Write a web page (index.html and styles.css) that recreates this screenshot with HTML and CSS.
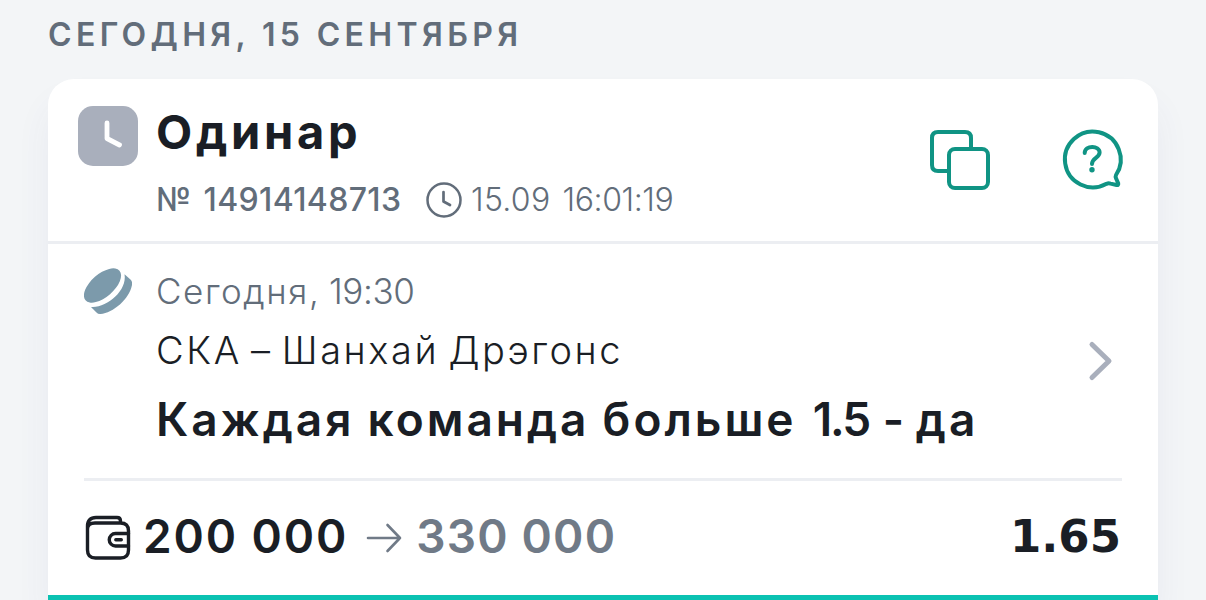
FILE: index.html
```
<!DOCTYPE html>
<html lang="ru">
<head>
    <meta charset="UTF-8">
    <meta name="viewport" content="width=device-width, initial-scale=1.0">
    <title>История ставок</title>
    <link rel="stylesheet" href="styles.css">
</head>
<body>
    <main class="history">
        <h2 class="day">СЕГОДНЯ, 15 СЕНТЯБРЯ</h2>

        <article class="bet">
            <header class="bet-header">
                <div class="status">
                    <svg class="icon" width="60" height="60" viewBox="0 0 60 60">
                        <path d="M29 17v15.500l12.500 6.500" stroke="#fff" stroke-width="4.800"/>
                    </svg>
                </div>
                <div class="bet-info">
                    <h3 class="bet-type">Одинар</h3>
                    <div class="meta">
                        <span class="bet-number">№ <span class="digits">14914148713</span></span>
                        <svg class="icon" width="36" height="36" viewBox="0 0 36 36">
                            <circle cx="18" cy="18" r="16.500" stroke-width="2.500"/>
                            <path d="M17.500 10v9.500l6.500 3.500" stroke-width="2.700"/>
                        </svg>
                        <time class="bet-time"><span>15.09</span><span class="clock">16:01:19</span></time>
                    </div>
                </div>
                <div class="actions">
                    <svg class="icon" width="60" height="60" viewBox="0 0 60 60">
                        <path d="M19 41H8q-6 0-6-6V8q0-6 6-6h27q6 0 6 6v11"/>
                        <rect x="19" y="19" width="39" height="39" rx="6"/>
                    </svg>
                    <svg class="icon" width="60" height="60" viewBox="0 0 60 60">
                        <path d="M54 45A27.900 27.900 0 1 0 44.500 53.800Q46.500 53 48.500 53.600L54.500 55Q56.600 55.300 56.200 53.300L54 48.300Q53.200 46.800 54 45Z"/>
                        <path d="M22.700 23C22.900 15 37.600 15 37.600 22.500C37.600 28 30 28 30 34"/>
                        <circle cx="30" cy="39.800" r="2.700" fill="currentColor" stroke="none"/>
                    </svg>
                </div>
            </header>

            <section class="event">
                <svg class="puck" width="50" height="48" viewBox="0 0 50 48">
                    <ellipse cx="18.500" cy="17.500" rx="22.500" ry="11.500" transform="rotate(-41 18.500 17.500)"/>
                    <path d="M40.500 6.300L47 12Q48.500 13.500 48 17C45.500 31 29 45 16.500 46Q14 46.200 12.500 44.500L7 38.900C22 40.500 43.500 23 40.500 6.300Z"/>
                </svg>
                <div class="event-info">
                    <time class="event-date">Сегодня, <span class="event-hour">19:30</span></time>
                    <p class="teams">СКА – Шанхай Дрэгонс</p>
                    <p class="market">Каждая команда больше <span class="market-value">1.5 - </span>да</p>
                </div>
                <svg class="icon chevron" width="24" height="40" viewBox="0 0 24 40">
                    <path d="M3 3.500L20 20L3 36.500" stroke-width="5"/>
                </svg>
            </section>

            <footer class="sum">
                <svg class="icon" width="48" height="48" viewBox="0 0 48 48">
                    <path d="M3.500 12V36q0 8 8 8H36.500q8 0 8-8V17q0-8-8-8H11q-7.500 0-7.500 6M3.500 12q0-8.500 8.500-8.500H33q3.500 0 3.500 3.500v2" stroke-width="3.400"/>
                    <path d="M44.500 19.500H31.500a6 6 0 0 0 0 12.500H44.500M31.800 25.700h5.500" stroke-width="3.400"/>
                </svg>
                <span class="stake">200 000</span>
                <svg class="icon arrow" width="36" height="32" viewBox="0 0 36 32">
                    <path d="M2 16H34M21.500 3L34 16L21.500 29" stroke-width="2.600"/>
                </svg>
                <span class="win">330 000</span>
                <strong class="odds">1.65</strong>
            </footer>
        </article>
    </main>
</body>
</html>
```
FILE: styles.css
```
:root {
    --text-color: #1a1e25;
    --muted-color: #626d7a;
    --accent-color: #109484;
    --line-color: #eceef2;
}
body {
    margin: 0;
    height: 600px;
    overflow: hidden;
    font-family: Inter, "Noto Sans", sans-serif;
    color: var(--text-color);
    background-color: #f3f5f7;
}
h2, h3, p {
    margin: 0;
}
.icon {
    flex: none;
    overflow: visible;
    fill: none;
    stroke: currentColor;
    stroke-width: 4px;
    stroke-linecap: round;
    stroke-linejoin: round;
}
.history {
    padding: 15px 48px 0;
}
.day {
    font-size: 32px;
    line-height: 40px;
    font-weight: 600;
    letter-spacing: 4.35px;
    color: var(--muted-color);
    white-space: nowrap;
}
.bet {
    box-sizing: border-box;
    margin-top: 24px;
    height: 521px;
    background-color: white;
    border-bottom: 5px solid #0bc2b2;
    border-radius: 26px 26px 0 0;
    box-shadow: 0 24px 36px rgba(60, 70, 130, 0.06);
}

/* шапка купона */
.bet-header {
    display: flex;
    height: 162px;
    padding: 0 36px 0 30px;
    border-bottom: 3px solid var(--line-color);
}
.status {
    width: 60px;
    height: 60px;
    margin-top: 27px;
    border-radius: 15px;
    background-color: #a9afbc;
}
.bet-info {
    flex: 1;
    padding: 26px 0 0 18px;
}
.bet-type {
    font-size: 47px;
    line-height: 53px;
    font-weight: 700;
    letter-spacing: 3.7px;
}
.meta {
    display: flex;
    align-items: center;
    height: 40px;
    margin-top: 22px;
    font-size: 32px;
    line-height: 40px;
    color: var(--muted-color);
    white-space: nowrap;
}
.bet-number {
    width: 270px;
    font-weight: 450;
    word-spacing: 4px;
}
.digits {
    letter-spacing: 0.35px;
}
.bet-time {
    display: flex;
    gap: 12px;
    margin-left: 9px;
    font-weight: 300;
    letter-spacing: 0.3px;
}
.clock {
    letter-spacing: -0.4px;
}
.actions {
    display: flex;
    gap: 72px;
    margin-top: 51px;
    color: var(--accent-color);
}

/* событие */
.event {
    display: flex;
    height: 234px;
    margin: 0 36px;
    border-bottom: 3px solid var(--line-color);
}
.puck {
    flex: none;
    margin-top: 24px;
    fill: #7c9aab;
}
.event-info {
    flex: 1;
    padding: 25px 0 0 22px;
    white-space: nowrap;
}
.event-date {
    display: block;
    font-size: 35px;
    line-height: 44px;
    font-weight: 300;
    letter-spacing: 1.6px;
    color: var(--muted-color);
}
.event-hour {
    margin-left: -3px;
    letter-spacing: -0.4px;
}
.teams {
    margin-top: 12px;
    font-size: 38px;
    line-height: 50px;
    font-weight: 300;
    letter-spacing: 2.55px;
    word-spacing: -4px;
}
.market {
    margin-top: 16px;
    font-size: 46px;
    line-height: 57px;
    font-weight: 600;
    letter-spacing: 3px;
    word-spacing: -1.5px;
}
.market-value {
    margin-left: 3px;
    letter-spacing: -2px;
    word-spacing: 4px;
}
.chevron {
    align-self: center;
    margin-right: 9px;
    color: #a9afbc;
}

/* сумма и коэффициент */
.sum {
    display: flex;
    align-items: center;
    height: 113px;
    padding: 0 36px;
    font-size: 46px;
    font-weight: 600;
    line-height: 56px;
}
.stake {
    margin: -3px 0 0 11px;
    letter-spacing: 1.9px;
}
.arrow {
    margin-left: 18px;
    color: #707a87;
}
.win {
    margin: -3px 0 0 14px;
    letter-spacing: 1.2px;
    color: #707a87;
}
.odds {
    margin: -2px 1px 0 auto;
    font-family: "DejaVu Sans", sans-serif;
    font-size: 45px;
    font-weight: 700;
}
```
